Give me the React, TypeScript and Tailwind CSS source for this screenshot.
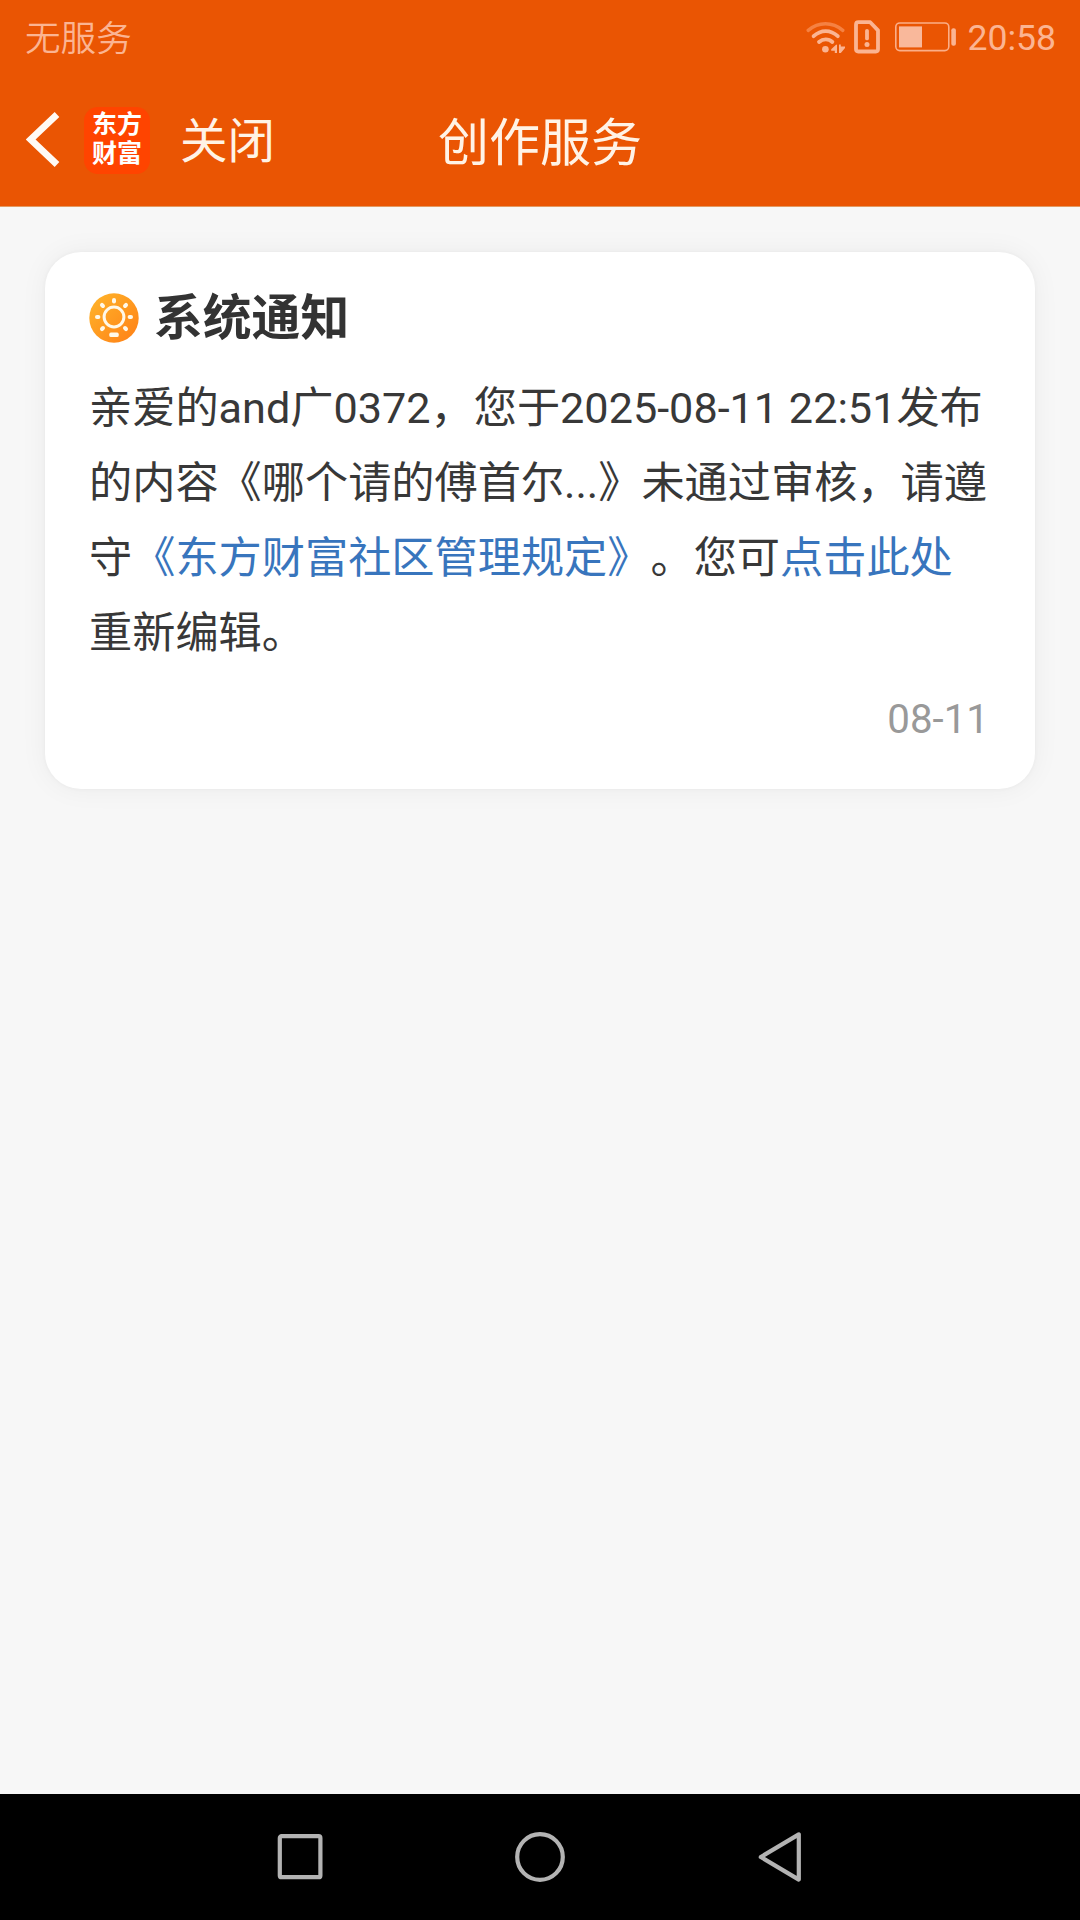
function WifiIcon() {
  return (
    <svg width="40" height="34" viewBox="0 0 40 34" fill="none" strokeLinecap="round">
      <path d="M2.2 10.4C12.5 1.6 26.5 1.6 36.8 10.4" stroke="#f58142" strokeWidth="3.4" />
      <path d="M7.6 16.2C15 9.4 24.5 9.4 31.8 16.2" stroke="#fbb492" strokeWidth="3.8" />
      <path d="M13 22C17 18.4 22.6 18.4 26.4 22" stroke="#fbb492" strokeWidth="3.8" />
      <circle cx="19.4" cy="29.2" r="3.3" fill="#fbb492" />
      <path d="M31 25V33H28.8V30.8H25.2V29.2L30.3 24.6Z" fill="#fbb492" />
      <path d="M33 24.6V33H34.8L39 28V26.6H34.8V24.6Z" fill="#fbb492" />
    </svg>
  );
}

function SimAlertIcon() {
  return (
    <svg width="26" height="34" viewBox="0 0 26 34" fill="none">
      <path
        d="M4.5 2.2H16.2L24 10.4V29.3Q24 31.5 21.8 31.5H4.2Q2 31.5 2 29.3V4.7Q2 2.2 4.5 2.2Z"
        stroke="#fbb492"
        strokeWidth="3.8"
        strokeLinejoin="round"
      />
      <path d="M13 10.8V18.4" stroke="#fbb492" strokeWidth="3.8" strokeLinecap="round" />
      <circle cx="13" cy="24.6" r="2.5" fill="#fbb492" />
    </svg>
  );
}

function BatteryIcon() {
  return (
    <svg width="62" height="30" viewBox="0 0 62 30" fill="none">
      <rect x="0.8" y="1" width="53" height="27.6" rx="4" stroke="#fbae88" strokeWidth="1.6" />
      <rect x="4" y="4.4" width="23" height="21" fill="#f9b89b" />
      <rect x="56.3" y="6.3" width="4.6" height="17.4" rx="2" fill="#fbb492" />
    </svg>
  );
}

function SunIcon() {
  const rays = [-135, -90, -45, 0, 45, 135, 180];
  return (
    <svg className="-mt-[2px]" width="50" height="50" viewBox="0 0 50 50" fill="none">
      <defs>
        <linearGradient id="sun" x1="0" y1="0" x2="1" y2="1">
          <stop offset="0" stopColor="#ffb62a" />
          <stop offset="1" stopColor="#ff7f16" />
        </linearGradient>
      </defs>
      <circle cx="25" cy="25" r="24.7" fill="url(#sun)" />
      <circle cx="25" cy="24" r="9.9" stroke="#fff8e8" strokeWidth="3" />
      {rays.map((deg) => (
        <path
          key={deg}
          d="M15.6 0H17"
          transform={`translate(25 24) rotate(${deg})`}
          stroke="#fff8e8"
          strokeWidth="4"
          strokeLinecap="round"
        />
      ))}
      <rect x="20.3" y="39.6" width="9.4" height="4.4" rx="1.6" fill="#fff8e8" />
    </svg>
  );
}

function StatusBar() {
  return (
    <div className="flex h-[74px] items-center justify-between pl-[25px] pr-6 text-[#fbb492]">
      <span className="pt-[4px] text-[35.6px] font-[350] leading-[74px]">无服务</span>
      <div className="flex items-center">
        <WifiIcon />
        <div className="ml-[8px] -mt-px">
          <SimAlertIcon />
        </div>
        <div className="ml-[15px] -mt-px">
          <BatteryIcon />
        </div>
        <span className="ml-[10px] pt-[2px] text-[35.6px] leading-[74px]">20:58</span>
      </div>
    </div>
  );
}

function TitleBar() {
  return (
    <div className="grid h-[132px] grid-cols-3 items-center text-[#fff3e6]">
      <div className="flex items-center">
        <svg className="ml-[26px]" width="34" height="56" viewBox="0 0 34 56" fill="none">
          <path d="M31 2.5L4.6 27.5L31 52.5" stroke="#fffaf4" strokeWidth="6.8" />
        </svg>
        <div className="ml-[24px] flex h-[67px] w-[66px] flex-col items-center justify-center rounded-[14px] bg-[#ff4400] pb-[3px] text-[25px] font-bold leading-[29px] text-white">
          <span>东方</span>
          <span>财富</span>
        </div>
        <span className="ml-[30px] whitespace-nowrap pt-[4px] text-[47.5px] leading-[60px]">关闭</span>
      </div>
      <h1 className="pt-[7px] text-center text-[51px] leading-[60px]">创作服务</h1>
    </div>
  );
}

function NoticeCard() {
  return (
    <div className="mx-[45px] mt-[45px] h-[537px] rounded-[36px] bg-white pl-[44px] pr-[46px] pt-[37px] shadow-[0_0_28px_rgba(0,0,0,0.05),0_0_5px_rgba(0,0,0,0.04)]">
      <div className="flex h-[60px] items-center">
        <SunIcon />
        <h2 className="ml-[15px] text-[48.8px] font-bold leading-[60px] text-[#333]">系统通知</h2>
      </div>
      <p className="mt-[22px] whitespace-nowrap text-[43.2px] leading-[75px] text-[#383838] [text-spacing-trim:space-all]">
        亲爱的and广0372，您于2025-08-11 22:51发布
        <br />
        的内容《哪个请的傅首尔...》未通过审核，请遵
        <br />
        守<a className="text-[#3875bd]">《东方财富社区管理规定》</a>。您可
        <a className="text-[#3875bd]">点击此处</a>
        <br />
        重新编辑。
      </p>
      <div className="mt-[24px] text-right text-[40.3px] leading-[50px] text-[#999]">08-11</div>
    </div>
  );
}

function NavBar() {
  return (
    <div className="flex h-[126px] items-center justify-between bg-black px-[276px]">
      <svg width="48" height="52" viewBox="0 0 48 52" fill="none" stroke="#b3b3b3" strokeWidth="4.2">
        <rect x="3.8" y="5.2" width="40.6" height="41" rx="1.8" />
      </svg>
      <svg width="52" height="52" viewBox="0 0 52 52" fill="none" stroke="#b3b3b3" strokeWidth="4.2">
        <circle cx="26" cy="26" r="22.8" />
      </svg>
      <svg width="48" height="52" viewBox="0 0 48 52" fill="none" stroke="#b3b3b3" strokeWidth="4.2">
        <path d="M4.8 26L42.8 3.4V48.6Z" strokeLinejoin="round" />
      </svg>
    </div>
  );
}

export default function App() {
  return (
    <div className="flex h-[1920px] w-[1080px] flex-col bg-[#f7f7f7] font-[Roboto,'Noto_Sans_CJK_SC',sans-serif]">
      <header className="border-b border-[#e39a62] bg-[#ea5503]">
        <StatusBar />
        <TitleBar />
      </header>
      <main className="flex-1">
        <NoticeCard />
      </main>
      <NavBar />
    </div>
  );
}
